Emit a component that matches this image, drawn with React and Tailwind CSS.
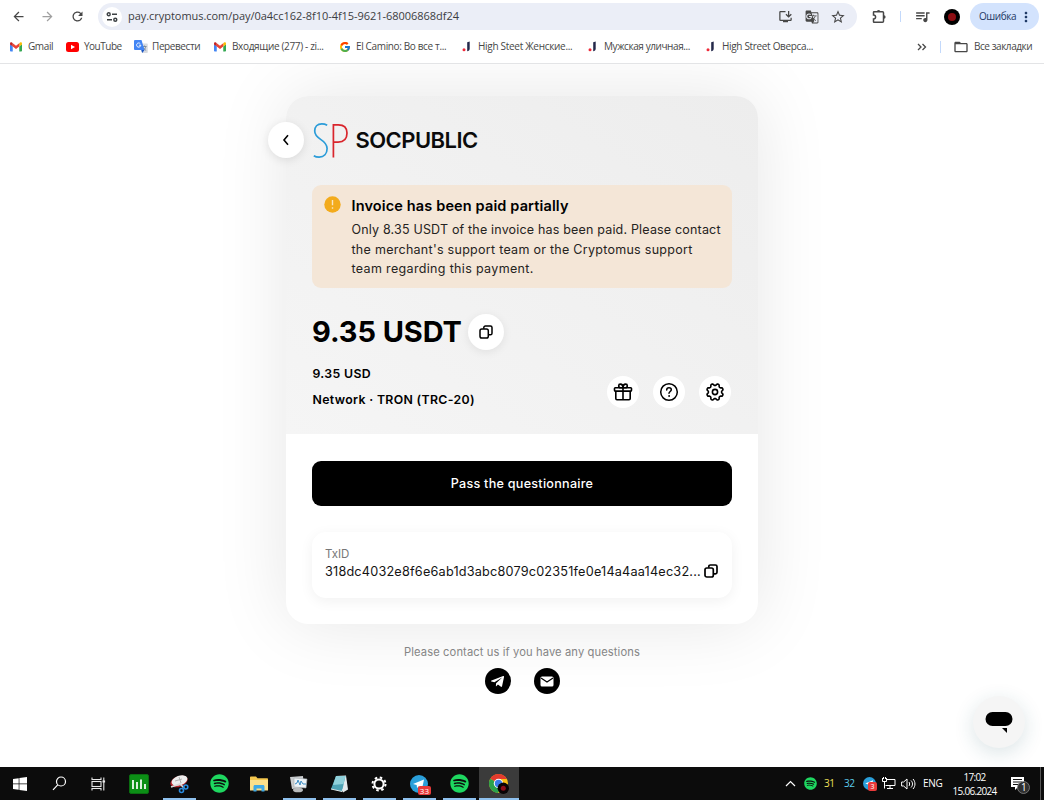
import { FcGoogle } from 'react-icons/fc';
import { FaSpotify, FaTelegramPlane } from 'react-icons/fa';
import {
  MdArrowBack,
  MdArrowForward,
  MdRefresh,
  MdStarBorder,
  MdQueueMusic,
  MdMoreVert,
  MdGTranslate,
  MdFolderOpen,
  MdOutlineInstallDesktop,
} from 'react-icons/md';

function GmailIcon() {
  return (
    <svg width="12" height="10" viewBox="0 0 24 18">
      <path d="M0 2v14.4C0 17.3.7 18 1.6 18h3.9V8L0 3z" fill="#4285f4" />
      <path d="M18.500 18h3.900c.9 0 1.600-.7 1.600-1.600V3l-5.500 5z" fill="#34a853" />
      <path d="M18.500 1.500V8L24 3.900V2.200c0-2-2.300-3.200-3.900-2z" fill="#fbbc04" />
      <path d="M5.500 8V1.500l6.500 5 6.500-5V8L12 13z" fill="#ea4335" />
      <path d="M0 2.200v1.700L5.500 8V1.500L3.900.2C2.300-1 0 .2 0 2.200z" fill="#c5221f" />
    </svg>
  );
}

function YoutubeIcon() {
  return (
    <svg width="13" height="10" viewBox="0 0 13 10">
      <rect width="13" height="10" rx="2.500" fill="#f00" />
      <path d="M5 2.800v4.400L9 5z" fill="#fff" />
    </svg>
  );
}

function TranslateIcon() {
  return (
    <svg width="14" height="13" viewBox="0 0 14 13">
      <path d="M5 3.500h8a.8.8 0 0 1 .8.8v7.900a.8.8 0 0 1-.8.8H8z" fill="#dadce0" />
      <path d="M8.500 6.500h4M10.500 5.500v1M9 10.500c1.600-.9 2.500-2.300 2.800-4M9.300 7.500c.6 1.300 1.500 2.200 2.900 3" stroke="#6f8090" strokeWidth=".8" fill="none" />
      <path d="M1 0h6.500l3 10H1a1 1 0 0 1-1-1V1a1 1 0 0 1 1-1z" fill="#4285f4" />
      <path d="M7.300 10h3.200L8.200 13z" fill="#1a56c4" />
      <path d="M6.300 3.700A2.100 2.100 0 1 0 6.800 5.200H4.900" stroke="#fff" strokeWidth=".9" fill="none" />
    </svg>
  );
}

function ShopIcon() {
  return (
    <svg width="9" height="11" viewBox="0 0 9 11">
      <path d="M5.200 1.200 7.700.5v7.300c0 1.400-1 2.300-2.500 2.500z" fill="#23284a" />
      <circle cx="2" cy="8.800" r="1.500" fill="#ef2b3a" />
    </svg>
  );
}

function TuneIcon() {
  return (
    <svg width="12" height="12" viewBox="0 0 12 12" fill="none" stroke="#3c4043" strokeWidth="1.400">
      <circle cx="2.700" cy="3.300" r="1.500" />
      <path d="M6 3.300h5M1 8.700h5" />
      <circle cx="9.300" cy="8.700" r="1.500" />
    </svg>
  );
}

function ExtensionIcon() {
  return (
    <svg width="15" height="15" viewBox="0 0 15 15" fill="none" stroke="#474747" strokeWidth="1.500" className="ml-[15px]">
      <path d="M2 2.800h8.500c.6 0 1 .4 1 1v8.400c0 .6-.4 1-1 1H2c-.3 0-.5-.2-.5-.5V10c1.300-.1 2.100-.9 2.100-2s-.8-1.900-2.100-2V3.300c0-.3.2-.5.500-.5z" />
      <path d="M4.800 2.500a1.800 1.600 0 0 1 3.600 0zM12 6.200a1.600 1.800 0 0 1 0 3.600z" fill="#474747" stroke="none" />
    </svg>
  );
}

function CopyIcon({ size = 14, stroke = 1.4 }) {
  return (
    <svg width={size} height={size} viewBox="0 0 14 14" fill="none" stroke="#000" strokeWidth={stroke}>
      <rect x="1" y="4" width="8.300" height="9" rx="1.800" />
      <path d="M4.800 3.800V2.600c0-.9.700-1.600 1.600-1.600h5c.9 0 1.600.7 1.600 1.600v5.600c0 .9-.7 1.600-1.600 1.600H9.600" />
    </svg>
  );
}

function GiftIcon() {
  return (
    <svg width="20" height="20" viewBox="0 0 20 20" fill="none" stroke="#000" strokeWidth="1.600">
      <rect x="1.500" y="5.700" width="17" height="3.400" rx=".8" />
      <path d="M2.800 9.100v7.500c0 .7.500 1.200 1.200 1.200h12c.7 0 1.200-.5 1.200-1.200V9.100M10 3v15" />
      <path d="M10 5.700H7.700C6.200 5.700 5.700 4.700 5.700 3.700s.7-1.600 1.700-1.600C9 2.100 10 3.400 10 5.700zM10 5.700h2.300c1.500 0 2-1 2-2s-.7-1.600-1.700-1.600C11 2.100 10 3.400 10 5.700z" />
    </svg>
  );
}

function HelpIcon() {
  return (
    <svg width="20" height="20" viewBox="0 0 20 20" fill="none" stroke="#000" strokeWidth="1.500" strokeLinecap="round">
      <circle cx="10" cy="10" r="8.300" />
      <path d="M7.700 7.900c0-1.400 1-2.200 2.300-2.200s2.300.9 2.300 2.100c0 1.600-2.300 1.800-2.300 3.500" />
      <circle cx="10" cy="14" r=".4" fill="#000" strokeWidth="1" />
    </svg>
  );
}

// eight rounded teeth around the centre of a 20x20 box
const gearPoints = Array.from({ length: 96 }, (_, i) => {
  const angle = (i / 96) * Math.PI * 2;
  const radius = 7.5 - 0.95 * Math.tanh(1.8 * Math.cos(8 * angle));
  return `${(10 + radius * Math.cos(angle)).toFixed(2)},${(10 + radius * Math.sin(angle)).toFixed(2)}`;
}).join(' ');

function GearIcon() {
  return (
    <svg width="20" height="20" viewBox="0 0 20 20" fill="none" stroke="#000" strokeWidth="1.600" strokeLinejoin="round">
      <polygon points={gearPoints} />
      <circle cx="10" cy="10" r="2.600" />
    </svg>
  );
}

const bookmarks = [
  { label: 'Gmail', icon: <GmailIcon />, width: 'w-[56px]', iconWidth: 'w-[18px]', text: 'tracking-[-0.4px]' },
  { label: 'YouTube', icon: <YoutubeIcon />, width: 'w-[68px]', iconWidth: 'w-[18px]', text: 'tracking-[-0.5px]' },
  { label: 'Перевести', icon: <TranslateIcon />, width: 'w-[80px]', iconWidth: 'w-[18px]', text: 'tracking-[-0.4px]' },
  { label: 'Входящие (277) - zi...', icon: <GmailIcon />, width: 'w-[125px]', iconWidth: 'w-[18px]', text: 'tracking-[-0.34px]' },
  { label: 'El Camino: Во все т...', icon: <FcGoogle size={12} />, width: 'w-[123px]', iconWidth: 'w-[17px]', text: 'tracking-[-0.36px]' },
  { label: 'High Steet Женские...', icon: <ShopIcon />, width: 'w-[126px]', iconWidth: 'w-[16px]', text: 'tracking-[-0.3px]' },
  { label: 'Мужская уличная...', icon: <ShopIcon />, width: 'w-[118px]', iconWidth: 'w-[16px]', text: 'tracking-[-0.42px]' },
  { label: 'High Street Оверса...', icon: <ShopIcon />, width: 'w-[118px]', iconWidth: 'w-[16px]', text: 'tracking-[-0.33px]' },
];

function BrowserBar() {
  return (
    <header className="h-16 shrink-0 border-b border-[#e3e4e6] bg-white font-['Open_Sans',sans-serif] text-[#474747]">
      <div className="flex h-[33px] items-center">
        <div className="flex w-[98px] items-center gap-[14.500px] pl-[10.500px]">
          <MdArrowBack size={15} className="shrink-0" />
          <MdArrowForward size={15} className="shrink-0 text-[#a0a0a0]" />
          <MdRefresh size={15} className="shrink-0" />
        </div>
        <div className="flex h-[27px] w-[759px] items-center rounded-full bg-[#ebeef7] pl-[4px]">
          <span className="flex size-[20px] items-center justify-center rounded-full bg-white">
            <TuneIcon />
          </span>
          <span className="ml-[6px] w-[650px] text-[11px] tracking-[-0.04px] whitespace-nowrap text-[#3b3d42]">
            pay.cryptomus.com/pay/0a4cc162-8f10-4f15-9621-68006868df24
          </span>
          <MdOutlineInstallDesktop size={15} />
          <MdGTranslate size={14} className="ml-[12px]" />
          <MdStarBorder size={16} className="ml-[11px]" />
        </div>
        <ExtensionIcon />
        <span className="ml-[13px] h-[11px] w-px bg-[#c3d9fb]" />
        <MdQueueMusic size={17} className="ml-[13px]" />
        <span className="ml-[13px] flex size-4 items-center justify-center rounded-full bg-black">
          <span className="size-2 rounded-full bg-[#8c0d12]" />
        </span>
        <div className="ml-[10px] flex h-[27px] w-[69px] items-center rounded-full bg-[#d3e3fd] pl-[9px] text-[#1d3864]">
          <span className="w-[39px] text-[10px] tracking-[-0.45px]">Ошибка</span>
          <MdMoreVert size={16} />
        </div>
      </div>
      <div className="flex h-[27px] items-center pl-[10px] text-[10px]">
        {bookmarks.map((item) => (
          <div key={item.label} className={`flex shrink-0 items-center whitespace-nowrap ${item.width}`}>
            <span className={`shrink-0 ${item.iconWidth}`}>{item.icon}</span>
            <span className={item.text}>{item.label}</span>
          </div>
        ))}
        <svg className="ml-[93px]" width="10" height="8" viewBox="0 0 10 8" fill="none" stroke="#474747" strokeWidth="1.300">
          <path d="m1 1 3 3-3 3M5.500 1l3 3-3 3" />
        </svg>
        <span className="ml-[13px] h-[12px] w-px bg-[#c3d9fb]" />
        <MdFolderOpen size={16} className="ml-[12px]" />
        <span className="ml-[5px] tracking-[-0.45px] whitespace-nowrap">Все закладки</span>
      </div>
    </header>
  );
}

function InvoiceHead() {
  return (
    <div className="relative h-[338px] rounded-t-[22px] bg-linear-to-tr from-[#f5f5f5] to-[#ededed] px-[26px] pt-[26px]">
      <button className="absolute top-[26px] -left-[18px] flex size-9 items-center justify-center rounded-full bg-white shadow-[0_2px_10px_rgba(0,0,0,0.10)]">
        <svg width="8" height="12" viewBox="0 0 8 12" fill="none" stroke="#000" strokeWidth="1.600">
          <path d="M6 1.200 2 6l4 4.800" />
        </svg>
      </button>
      <div className="flex h-9 items-center">
        <svg width="37" height="36" viewBox="0 0 37 36" fill="none" strokeWidth="1.700">
          <path d="M15.200 3.200C13.300 2.200 11.700 1.900 9.800 1.900 5.300 1.900 2.700 4.900 2.700 9.100c0 3.900 2.400 6 5.900 8.300 3.900 2.500 6.500 4.900 6.500 9.200 0 5-3.100 8.500-7.900 8.500-2 0-4-.5-5.400-1.400" stroke="#2b9cd8" />
          <path d="M21.400 35.500V2.800h4.900c5.500 0 8.700 2.900 8.700 8.300 0 5.800-3.400 9-8.900 9h-4.700" stroke="#d9252c" />
        </svg>
        <h1 className="ml-[6.500px] text-[22px] font-semibold tracking-[-0.55px] text-[#0b0b0b]">SOCPUBLIC</h1>
      </div>

      <div className="mt-[27px] flex h-[103px] rounded-[9px] bg-[#f4e6d7] pt-[11px] pl-[11.500px]">
        <svg width="17" height="17" viewBox="0 0 17 17" className="shrink-0">
          <circle cx="8.500" cy="8.500" r="8.200" fill="#f3ab1c" />
          <path d="M8.500 4v5.300M8.500 11.200v1.500" stroke="#fbe6c2" strokeWidth="1.400" />
        </svg>
        <div className="ml-[11px] whitespace-nowrap">
          <h2 className="text-[14.500px] leading-[19px] font-semibold tracking-[0.14px] text-black">Invoice has been paid partially</h2>
          <p className="mt-[5px] text-[12.500px] leading-[19.500px] tracking-[0.18px] text-[#252321]">
            Only 8.35 USDT of the invoice has been paid. Please contact
            <br />
            <span className="tracking-[0.28px]">the merchant's support team or the Cryptomus support</span>
            <br />
            <span className="tracking-[0.34px]">team regarding this payment.</span>
          </p>
        </div>
      </div>

      <div className="mt-[26px] flex h-9 items-center text-black">
        <span className="w-[156px] text-[29px] font-bold tracking-[-0.1px] whitespace-nowrap">9.35 USDT</span>
        <button className="flex size-9 items-center justify-center rounded-full bg-white shadow-[0_2px_10px_rgba(0,0,0,0.08)]">
          <CopyIcon size={14} stroke={1.5} />
        </button>
      </div>
      <div className="mt-[10px] flex justify-between text-[12.300px] font-semibold tracking-[0.34px] text-black">
        <div className="pt-px pl-[0.500px] leading-[26px]">
          <p>9.35 USD</p>
          <p>Network · TRON (TRC-20)</p>
        </div>
        <div className="mt-[16px] flex gap-[14px]">
          <button className="flex size-8 items-center justify-center rounded-full bg-white">
            <GiftIcon />
          </button>
          <button className="flex size-8 items-center justify-center rounded-full bg-white">
            <HelpIcon />
          </button>
          <button className="mr-px flex size-8 items-center justify-center rounded-full bg-white">
            <GearIcon />
          </button>
        </div>
      </div>
    </div>
  );
}

function InvoiceCard() {
  return (
    <section className="h-[528px] w-[472px] rounded-[22px] bg-white shadow-[0_0_72px_rgba(0,0,0,0.10)]">
      <InvoiceHead />
      <div className="px-[26px] pt-[27px]">
        <button className="h-[45px] w-full rounded-[9px] bg-black pt-[2px] text-[12.600px] font-medium tracking-[0.26px] text-white">
          Pass the questionnaire
        </button>
        <div className="mt-[26px] h-[66px] rounded-[14px] bg-white px-[13px] pt-[14px] shadow-[0_3px_14px_rgba(0,0,0,0.06)]">
          <p className="text-[11.500px] leading-[17px] text-[#777]">TxID</p>
          <div className="flex h-[17px] items-center">
            <span className="w-[379px] pt-px text-[12.700px] tracking-[0.19px] whitespace-nowrap text-[#141414]">
              318dc4032e8f6e6ab1d3abc8079c02351fe0e14a4aa14ec32...
            </span>
            <span className="mb-[2px]">
              <CopyIcon size={14} stroke={1.7} />
            </span>
          </div>
        </div>
      </div>
    </section>
  );
}

function ContactLinks() {
  return (
    <footer className="mt-[20px] flex flex-col items-center">
      <p className="text-[11.200px] leading-[17px] tracking-[0.1px] text-[#858585]">Please contact us if you have any questions</p>
      <div className="mt-[7px] flex gap-[23px]">
        <a className="flex size-[26px] items-center justify-center rounded-full bg-black text-white">
          <FaTelegramPlane size={15} />
        </a>
        <a className="flex size-[26px] items-center justify-center rounded-full bg-black">
          <svg width="14" height="11" viewBox="0 0 14 11">
            <rect x=".5" y=".5" width="13" height="10" rx="1.500" fill="#fff" />
            <path d="m1 2 6 4 6-4" fill="none" stroke="#000" strokeWidth="1.200" />
          </svg>
        </a>
      </div>
    </footer>
  );
}

function WindowsIcon() {
  return (
    <svg width="14" height="14" viewBox="0 0 14 14" fill="#fff">
      <path d="M0 2l5.700-.8v5.400H0zM6.400 1.100 14 0v6.600H6.400zM0 7.300h5.700v5.500L0 12zM6.400 7.300H14V14l-7.600-1.100z" />
    </svg>
  );
}

function SearchIcon() {
  return (
    <svg width="15" height="15" viewBox="0 0 15 15" fill="none" stroke="#fff" strokeWidth="1.200">
      <circle cx="9" cy="5.500" r="4.500" />
      <path d="M5.700 8.800 1 13.800" />
    </svg>
  );
}

function TaskViewIcon() {
  return (
    <svg width="15" height="14" viewBox="0 0 15 14" fill="none" stroke="#e8e8e8" strokeWidth="1.100" className="mr-[2px]">
      <path d="M1 .5v2h9v-2M1 13.500v-2h9v2M12.800.5v13" />
      <rect x="1" y="4.500" width="9" height="5" />
      <path d="M11.500 4.500h2.600" strokeWidth="2" />
    </svg>
  );
}

function ChartAppIcon() {
  return (
    <svg width="20" height="20" viewBox="0 0 20 20">
      <rect x=".5" y=".5" width="19" height="19" rx="1.500" fill="#0c8f16" stroke="#0a6d10" />
      <path d="M4 6v9M8 8v7M12 5.500V15M16 10v5" stroke="#fff" strokeWidth="1.700" />
    </svg>
  );
}

function SnipIcon() {
  return (
    <svg width="20" height="20" viewBox="0 0 20 20">
      <ellipse cx="10" cy="7.500" rx="9" ry="5.300" transform="rotate(-20 10 7.500)" fill="#b3232a" />
      <ellipse cx="10.500" cy="6.500" rx="8.200" ry="4.700" transform="rotate(-20 10.500 6.500)" fill="#eee" />
      <path d="m6 7 7-2M10 3l2 6" stroke="#aaa" strokeWidth=".9" />
      <path d="m2 13 9-3 4 4" stroke="#d8d8d8" strokeWidth="1.600" fill="none" />
      <circle cx="12.500" cy="16.500" r="2" fill="none" stroke="#2b8be0" strokeWidth="1.600" />
      <circle cx="16.800" cy="13" r="2" fill="none" stroke="#2b8be0" strokeWidth="1.600" />
    </svg>
  );
}

function ExplorerIcon() {
  return (
    <svg width="18" height="16" viewBox="0 0 18 16">
      <path d="M0 1.500C0 .7.500.5 1 .5h5l1.500 1.800H17c.6 0 1 .4 1 1V14H0z" fill="#f5c84f" />
      <path d="M0 4h18v10.500H0z" fill="#fce08a" />
      <path d="M3.500 15.500v-5c0-.8.600-1.500 1.400-1.500h8.200c.8 0 1.400.7 1.400 1.500v5h-3v-3h-5v3z" fill="#3fa9e5" />
    </svg>
  );
}

function MonitorIcon() {
  return (
    <svg width="20" height="18" viewBox="0 0 20 18">
      <path d="m1 2 13-1 1 11-12 2z" fill="#c9ccce" />
      <path d="m5 3 13 1-1 9-12-1z" fill="#edf3f7" stroke="#a5abb0" strokeWidth=".6" />
      <path d="m6 9 2-1 1-3 2 5 1-4 2 3h3" stroke="#3c8dc4" fill="none" />
      <ellipse cx="9" cy="15" rx="5" ry="2.300" fill="#b8bbbd" />
    </svg>
  );
}

function NotepadIcon() {
  return (
    <svg width="19" height="18" viewBox="0 0 19 18">
      <path d="m6 1 10-.5 2 14-5 3z" fill="#e6ecee" />
      <path d="M6 1h9.500L12 16.500 1 14z" fill="#4fa3b5" />
      <path d="M6 1h9.500l-2 8L3 10z" fill="#8fd0da" />
      <path d="m1 14 11 2.500L13 14" fill="none" stroke="#dfe8ea" />
    </svg>
  );
}

function TaskGearIcon() {
  return (
    <svg width="16" height="16" viewBox="0 0 16 16" fill="none" stroke="#fff">
      <circle cx="8" cy="8" r="4.600" strokeWidth="2" />
      <circle cx="8" cy="8" r="6.500" strokeWidth="2" strokeDasharray="2.500 2.605" />
    </svg>
  );
}

function TelegramIcon({ size = 18 }) {
  return (
    <svg width={size} height={size} viewBox="0 0 18 18">
      <circle cx="9" cy="9" r="9" fill="#2a9fda" />
      <path d="m3 9 11-4.500-2 9.500-3.300-2.400L7 13l-.3-3z" fill="#fff" />
    </svg>
  );
}

function ChromeIcon() {
  return (
    <svg width="20" height="20" viewBox="0 0 20 20">
      <circle cx="9.500" cy="9.500" r="9.500" fill="#fbc116" />
      <path d="M9.500 9.500 1.300 4.700A9.500 9.500 0 0 1 17.800 5H9.500z" fill="#e33b2e" />
      <path d="M9.500 9.500 1.300 4.700A9.500 9.500 0 0 0 9 19l4-7z" fill="#2ba24c" />
      <circle cx="9.500" cy="9.500" r="4.700" fill="#fff" />
      <circle cx="9.500" cy="9.500" r="3.700" fill="#3a7be8" />
      <circle cx="14.300" cy="14.300" r="5.700" fill="#080405" />
      <circle cx="14.300" cy="14.300" r="2.500" fill="#8c0d19" />
    </svg>
  );
}

const tasks = [
  { id: 'search', icon: <SearchIcon /> },
  { id: 'view', icon: <TaskViewIcon /> },
  { id: 'chart', icon: <ChartAppIcon /> },
  { id: 'snip', icon: <SnipIcon />, open: true },
  { id: 'spotify', icon: <FaSpotify size={19} color="#1ed760" /> },
  { id: 'files', icon: <ExplorerIcon /> },
  { id: 'monitor', icon: <MonitorIcon />, open: true },
  { id: 'notepad', icon: <NotepadIcon />, open: true },
  { id: 'settings', icon: <TaskGearIcon />, open: true },
  { id: 'telegram', icon: <TelegramIcon />, open: true, badge: '33' },
  { id: 'music', icon: <FaSpotify size={19} color="#1ed760" />, open: true },
  { id: 'chrome', icon: <ChromeIcon />, open: true, active: true },
];

function Taskbar() {
  return (
    <div className="flex h-[33px] shrink-0 bg-[#0c0c0c] font-['Open_Sans',sans-serif] text-white">
      <div className="flex w-[39px] items-center justify-center">
        <WindowsIcon />
      </div>
      {tasks.map((task) => (
        <div
          key={task.id}
          className={`relative flex w-10 shrink-0 items-center justify-center ${task.active ? 'bg-[#3b3b3b]' : ''}`}
        >
          {task.icon}
          {task.badge && (
            <span className="absolute right-[8px] bottom-[5px] h-[9px] rounded-[2px] bg-[#e93a3a] px-[2px] text-[8px] leading-[9px]">
              {task.badge}
            </span>
          )}
          {task.open && (
            <span className={`absolute bottom-0 h-[2px] bg-[#8fc1ee] ${task.active ? 'w-full' : 'w-[33px]'}`} />
          )}
        </div>
      ))}
      <div className="ml-auto flex items-center text-[10px]">
        <svg width="11" height="7" viewBox="0 0 11 7" fill="none" stroke="#fff" strokeWidth="1.200">
          <path d="m1 6 4.500-4.500L10 6" />
        </svg>
        <FaSpotify size={13} color="#1ed760" className="ml-[8px]" />
        <span className="ml-[7px] w-[20px] tracking-[-0.4px] text-[#f0e15a]">31</span>
        <span className="w-[19px] tracking-[-0.4px] text-[#5ccdec]">32</span>
        <span className="relative">
          <TelegramIcon size={13} />
          <span className="absolute -right-[1px] -bottom-[1px] size-[9px] rounded-[2px] bg-[#e93a3a] text-center text-[7px] leading-[9px]">3</span>
        </span>
        <svg className="ml-[6px]" width="14" height="13" viewBox="0 0 14 13" fill="none" stroke="#fff">
          <path d="M5 2.500h8v6H3.500M8 8.500v3M5 11.500h6M2.500 5v6.500" />
          <path d="M.5 1v3.500h4V1M1.500 0v2M3.500 0v2" />
        </svg>
        <svg className="ml-[5px]" width="15" height="12" viewBox="0 0 15 12" fill="none" stroke="#fff">
          <path d="M.6 4v4h2L6 11V1L2.600 4zM8 4c.8 1 .8 3 0 4M10 2.500c2 2 2 5 0 7M12 1c2.600 2.800 2.600 7.200 0 10" />
        </svg>
        <span className="ml-[7px] w-[21px] text-[10px] tracking-[-0.3px]">ENG</span>
        <div className="ml-[7px] w-[47px] text-center text-[10px] leading-[14px] tracking-[-0.72px] whitespace-nowrap">
          <p>17:02</p>
          <p>15.06.2024</p>
        </div>
        <span className="relative ml-[12px] h-[20px] w-[20px]">
          <svg width="20" height="20" viewBox="0 0 20 20">
            <path d="M1 3h13v10H8l-3 3v-3H1z" fill="#fff" />
            <path d="M3 5.500h9M3 8h9M3 10.500h6" stroke="#111" />
            <circle cx="13.500" cy="13.500" r="6" fill="#303030" stroke="#888" strokeWidth=".8" />
          </svg>
          <span className="absolute top-[7px] left-[11px] text-[10px] leading-[13px]">1</span>
        </span>
        <span className="ml-[10px] h-full w-px bg-[#555]" />
        <span className="w-[3px]" />
      </div>
    </div>
  );
}

function App() {
  return (
    <div className="flex h-[800px] w-[1044px] flex-col overflow-hidden bg-white font-['Inter',sans-serif]">
      <BrowserBar />
      <main className="relative flex flex-1 flex-col items-center overflow-hidden pt-8">
        <InvoiceCard />
        <ContactLinks />
        <button className="absolute right-[19px] bottom-[19px] flex size-[52px] items-center justify-center rounded-full bg-[#f5f5f5] shadow-[0_5px_20px_rgba(30,90,100,0.16)]">
          <svg width="28" height="22" viewBox="0 0 28 22">
            <rect x=".5" y="1" width="27" height="14" rx="7" />
            <path d="M17 17h5v5z" />
          </svg>
        </button>
      </main>
      <Taskbar />
    </div>
  );
}

export default App;
